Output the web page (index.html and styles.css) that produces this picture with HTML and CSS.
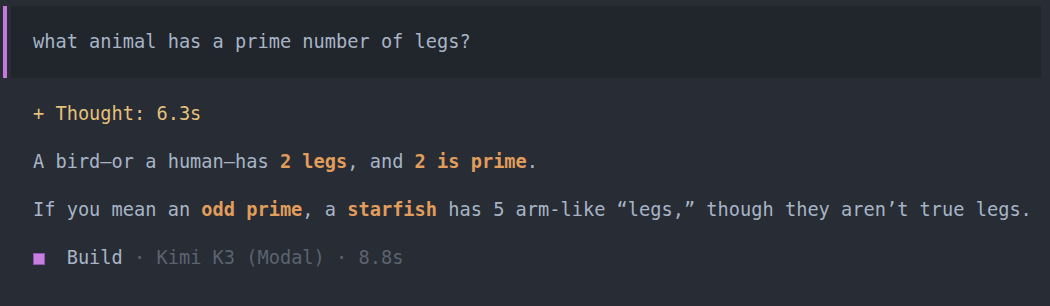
FILE: index.html
```html
<!DOCTYPE html>
<html>
<head>
<meta charset="utf-8">
<link rel="stylesheet" href="styles.css">
</head>
<body>
<div class="chat">
  <div class="prompt">
    <div class="prompt-inner">what animal has a prime number of legs?</div>
  </div>
  <div class="reply">
    <p class="line thought">+ Thought: 6.3s</p>
    <p class="line">A bird—or a human—has <b class="hl">2 legs</b>, and <b class="hl">2 is prime</b>.</p>
    <p class="line">If you mean an <b class="hl">odd prime</b>, a <b class="hl">starfish</b> has 5 arm-like “legs,” though they aren’t true legs.</p>
    <p class="line meta"><span class="icon"><span class="square"></span></span>  <span class="agent">Build</span> · Kimi K3 (Modal) · 8.8s</p>
  </div>
</div>
</body>
</html>
```
FILE: styles.css
```css
html, body {
  margin: 0;
  padding: 0;
  background: #282c34;
}
body {
  font-family: "DejaVu Sans Mono", "Liberation Mono", monospace;
  font-size: 18.65px;
  line-height: 24px;
  color: #a7b4c6;
  height: 306px;
  overflow: hidden;
}
.chat {
  padding: 6px 9px 0 3px;
}
.prompt {
  border-left: 4px solid #c678dd;
  padding-left: 4px;
}
.prompt-inner {
  background: #21252c;
  padding: 24px 22px;
  white-space: pre;
}
.reply {
  padding: 24px 0 0 30px;
  display: flex;
  flex-direction: column;
  gap: 24px;
}
.line {
  margin: 0;
  white-space: pre;
}
.thought {
  color: #e5c07b;
}
.hl {
  color: #e19d5c;
  font-weight: bold;
}
.meta {
  color: #5c6370;
}
.agent {
  color: #a7b4c6;
}
.icon {
  display: inline-block;
  width: 1ch;
  vertical-align: baseline;
}
.square {
  display: inline-block;
  width: 12px;
  height: 12px;
  box-sizing: border-box;
  background: #c77fe0;
  border: 1px solid #9055b0;
  vertical-align: -1px;
}
```
